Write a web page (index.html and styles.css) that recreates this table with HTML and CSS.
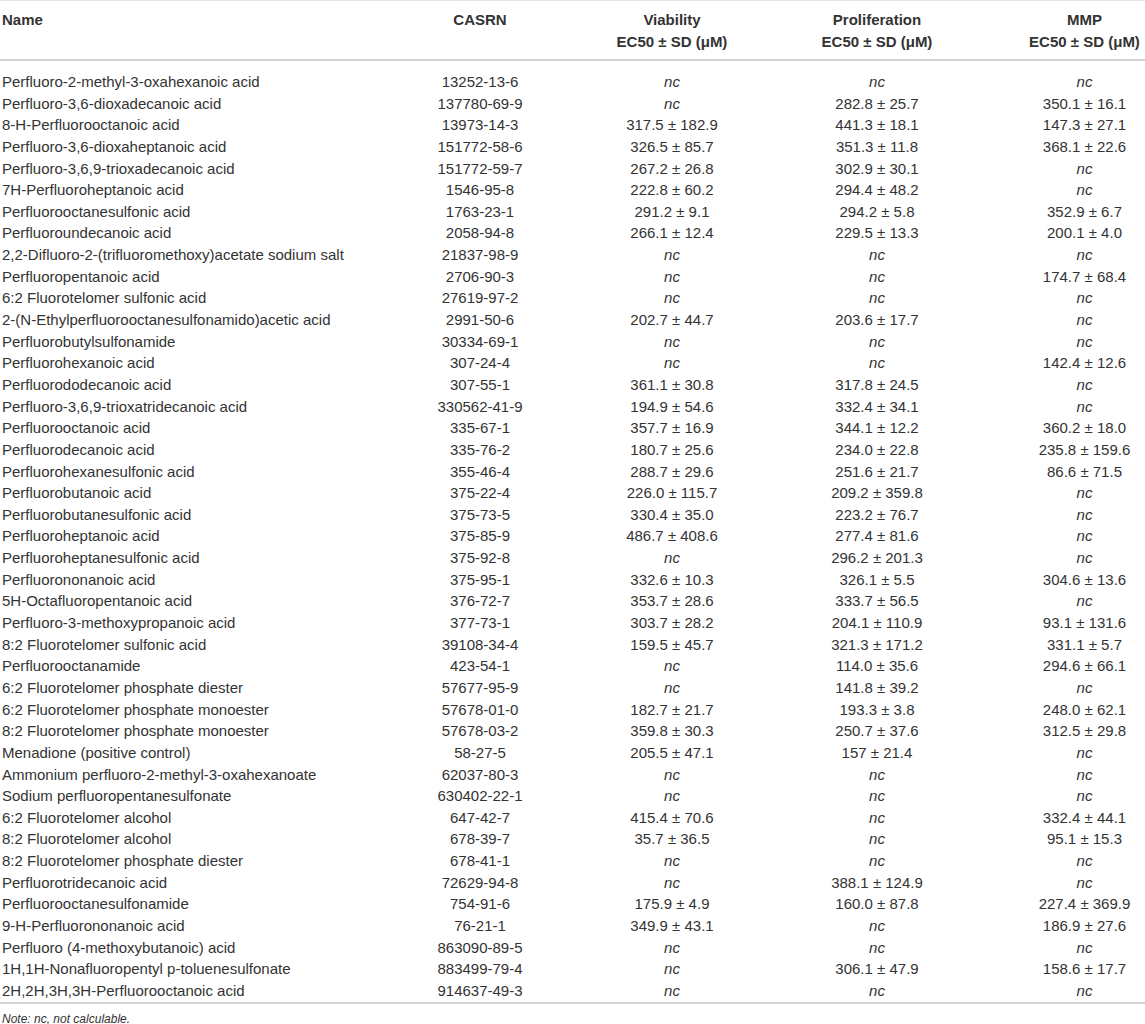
FILE: index.html
```html
<!DOCTYPE html>
<html>
<head>
    <meta charset="utf-8">
    <link rel="stylesheet" href="styles.css">
</head>
<body>
    <table class="data">
        <colgroup>
            <col class="c-name">
            <col class="c-cas">
            <col class="c-via">
            <col class="c-pro">
            <col class="c-mmp">
        </colgroup>
        <thead>
            <tr>
                <th class="name">Name</th>
                <th>CASRN</th>
                <th>Viability<br>EC50 ± SD (μM)</th>
                <th>Proliferation<br>EC50 ± SD (μM)</th>
                <th class="mmp">MMP<br>EC50 ± SD (μM)</th>
            </tr>
        </thead>
        <tbody>
            <tr><td class="name">Perfluoro-2-methyl-3-oxahexanoic acid</td><td>13252-13-6</td><td><i>nc</i></td><td><i>nc</i></td><td class="mmp"><i>nc</i></td></tr>
            <tr><td class="name">Perfluoro-3,6-dioxadecanoic acid</td><td>137780-69-9</td><td><i>nc</i></td><td>282.8 ± 25.7</td><td class="mmp">350.1 ± 16.1</td></tr>
            <tr><td class="name">8-H-Perfluorooctanoic acid</td><td>13973-14-3</td><td>317.5 ± 182.9</td><td>441.3 ± 18.1</td><td class="mmp">147.3 ± 27.1</td></tr>
            <tr><td class="name">Perfluoro-3,6-dioxaheptanoic acid</td><td>151772-58-6</td><td>326.5 ± 85.7</td><td>351.3 ± 11.8</td><td class="mmp">368.1 ± 22.6</td></tr>
            <tr><td class="name">Perfluoro-3,6,9-trioxadecanoic acid</td><td>151772-59-7</td><td>267.2 ± 26.8</td><td>302.9 ± 30.1</td><td class="mmp"><i>nc</i></td></tr>
            <tr><td class="name">7H-Perfluoroheptanoic acid</td><td>1546-95-8</td><td>222.8 ± 60.2</td><td>294.4 ± 48.2</td><td class="mmp"><i>nc</i></td></tr>
            <tr><td class="name">Perfluorooctanesulfonic acid</td><td>1763-23-1</td><td>291.2 ± 9.1</td><td>294.2 ± 5.8</td><td class="mmp">352.9 ± 6.7</td></tr>
            <tr><td class="name">Perfluoroundecanoic acid</td><td>2058-94-8</td><td>266.1 ± 12.4</td><td>229.5 ± 13.3</td><td class="mmp">200.1 ± 4.0</td></tr>
            <tr><td class="name">2,2-Difluoro-2-(trifluoromethoxy)acetate sodium salt</td><td>21837-98-9</td><td><i>nc</i></td><td><i>nc</i></td><td class="mmp"><i>nc</i></td></tr>
            <tr><td class="name">Perfluoropentanoic acid</td><td>2706-90-3</td><td><i>nc</i></td><td><i>nc</i></td><td class="mmp">174.7 ± 68.4</td></tr>
            <tr><td class="name">6:2 Fluorotelomer sulfonic acid</td><td>27619-97-2</td><td><i>nc</i></td><td><i>nc</i></td><td class="mmp"><i>nc</i></td></tr>
            <tr><td class="name">2-(N-Ethylperfluorooctanesulfonamido)acetic acid</td><td>2991-50-6</td><td>202.7 ± 44.7</td><td>203.6 ± 17.7</td><td class="mmp"><i>nc</i></td></tr>
            <tr><td class="name">Perfluorobutylsulfonamide</td><td>30334-69-1</td><td><i>nc</i></td><td><i>nc</i></td><td class="mmp"><i>nc</i></td></tr>
            <tr><td class="name">Perfluorohexanoic acid</td><td>307-24-4</td><td><i>nc</i></td><td><i>nc</i></td><td class="mmp">142.4 ± 12.6</td></tr>
            <tr><td class="name">Perfluorododecanoic acid</td><td>307-55-1</td><td>361.1 ± 30.8</td><td>317.8 ± 24.5</td><td class="mmp"><i>nc</i></td></tr>
            <tr><td class="name">Perfluoro-3,6,9-trioxatridecanoic acid</td><td>330562-41-9</td><td>194.9 ± 54.6</td><td>332.4 ± 34.1</td><td class="mmp"><i>nc</i></td></tr>
            <tr><td class="name">Perfluorooctanoic acid</td><td>335-67-1</td><td>357.7 ± 16.9</td><td>344.1 ± 12.2</td><td class="mmp">360.2 ± 18.0</td></tr>
            <tr><td class="name">Perfluorodecanoic acid</td><td>335-76-2</td><td>180.7 ± 25.6</td><td>234.0 ± 22.8</td><td class="mmp">235.8 ± 159.6</td></tr>
            <tr><td class="name">Perfluorohexanesulfonic acid</td><td>355-46-4</td><td>288.7 ± 29.6</td><td>251.6 ± 21.7</td><td class="mmp">86.6 ± 71.5</td></tr>
            <tr><td class="name">Perfluorobutanoic acid</td><td>375-22-4</td><td>226.0 ± 115.7</td><td>209.2 ± 359.8</td><td class="mmp"><i>nc</i></td></tr>
            <tr><td class="name">Perfluorobutanesulfonic acid</td><td>375-73-5</td><td>330.4 ± 35.0</td><td>223.2 ± 76.7</td><td class="mmp"><i>nc</i></td></tr>
            <tr><td class="name">Perfluoroheptanoic acid</td><td>375-85-9</td><td>486.7 ± 408.6</td><td>277.4 ± 81.6</td><td class="mmp"><i>nc</i></td></tr>
            <tr><td class="name">Perfluoroheptanesulfonic acid</td><td>375-92-8</td><td><i>nc</i></td><td>296.2 ± 201.3</td><td class="mmp"><i>nc</i></td></tr>
            <tr><td class="name">Perfluorononanoic acid</td><td>375-95-1</td><td>332.6 ± 10.3</td><td>326.1 ± 5.5</td><td class="mmp">304.6 ± 13.6</td></tr>
            <tr><td class="name">5H-Octafluoropentanoic acid</td><td>376-72-7</td><td>353.7 ± 28.6</td><td>333.7 ± 56.5</td><td class="mmp"><i>nc</i></td></tr>
            <tr><td class="name">Perfluoro-3-methoxypropanoic acid</td><td>377-73-1</td><td>303.7 ± 28.2</td><td>204.1 ± 110.9</td><td class="mmp">93.1 ± 131.6</td></tr>
            <tr><td class="name">8:2 Fluorotelomer sulfonic acid</td><td>39108-34-4</td><td>159.5 ± 45.7</td><td>321.3 ± 171.2</td><td class="mmp">331.1 ± 5.7</td></tr>
            <tr><td class="name">Perfluorooctanamide</td><td>423-54-1</td><td><i>nc</i></td><td>114.0 ± 35.6</td><td class="mmp">294.6 ± 66.1</td></tr>
            <tr><td class="name">6:2 Fluorotelomer phosphate diester</td><td>57677-95-9</td><td><i>nc</i></td><td>141.8 ± 39.2</td><td class="mmp"><i>nc</i></td></tr>
            <tr><td class="name">6:2 Fluorotelomer phosphate monoester</td><td>57678-01-0</td><td>182.7 ± 21.7</td><td>193.3 ± 3.8</td><td class="mmp">248.0 ± 62.1</td></tr>
            <tr><td class="name">8:2 Fluorotelomer phosphate monoester</td><td>57678-03-2</td><td>359.8 ± 30.3</td><td>250.7 ± 37.6</td><td class="mmp">312.5 ± 29.8</td></tr>
            <tr><td class="name">Menadione (positive control)</td><td>58-27-5</td><td>205.5 ± 47.1</td><td>157 ± 21.4</td><td class="mmp"><i>nc</i></td></tr>
            <tr><td class="name">Ammonium perfluoro-2-methyl-3-oxahexanoate</td><td>62037-80-3</td><td><i>nc</i></td><td><i>nc</i></td><td class="mmp"><i>nc</i></td></tr>
            <tr><td class="name">Sodium perfluoropentanesulfonate</td><td>630402-22-1</td><td><i>nc</i></td><td><i>nc</i></td><td class="mmp"><i>nc</i></td></tr>
            <tr><td class="name">6:2 Fluorotelomer alcohol</td><td>647-42-7</td><td>415.4 ± 70.6</td><td><i>nc</i></td><td class="mmp">332.4 ± 44.1</td></tr>
            <tr><td class="name">8:2 Fluorotelomer alcohol</td><td>678-39-7</td><td>35.7 ± 36.5</td><td><i>nc</i></td><td class="mmp">95.1 ± 15.3</td></tr>
            <tr><td class="name">8:2 Fluorotelomer phosphate diester</td><td>678-41-1</td><td><i>nc</i></td><td><i>nc</i></td><td class="mmp"><i>nc</i></td></tr>
            <tr><td class="name">Perfluorotridecanoic acid</td><td>72629-94-8</td><td><i>nc</i></td><td>388.1 ± 124.9</td><td class="mmp"><i>nc</i></td></tr>
            <tr><td class="name">Perfluorooctanesulfonamide</td><td>754-91-6</td><td>175.9 ± 4.9</td><td>160.0 ± 87.8</td><td class="mmp">227.4 ± 369.9</td></tr>
            <tr><td class="name">9-H-Perfluorononanoic acid</td><td>76-21-1</td><td>349.9 ± 43.1</td><td><i>nc</i></td><td class="mmp">186.9 ± 27.6</td></tr>
            <tr><td class="name">Perfluoro (4-methoxybutanoic) acid</td><td>863090-89-5</td><td><i>nc</i></td><td><i>nc</i></td><td class="mmp"><i>nc</i></td></tr>
            <tr><td class="name">1H,1H-Nonafluoropentyl p-toluenesulfonate</td><td>883499-79-4</td><td><i>nc</i></td><td>306.1 ± 47.9</td><td class="mmp">158.6 ± 17.7</td></tr>
            <tr><td class="name">2H,2H,3H,3H-Perfluorooctanoic acid</td><td>914637-49-3</td><td><i>nc</i></td><td><i>nc</i></td><td class="mmp"><i>nc</i></td></tr>
        </tbody>
    </table>
    <p class="note">Note: nc, not calculable.</p>
</body>
</html>
```

FILE: styles.css
```css
body {
    margin: 0;
    padding: 0;
    font-family: "Liberation Sans", Arial, sans-serif;
    color: #333;
    background: #fff;
}
.data {
    width: 1145px;
    border-collapse: collapse;
    table-layout: fixed;
    font-size: 15px;
    border-top: 1px solid #e4e4e4;
}
.c-name { width: 396px; }
.c-cas { width: 168px; }
.c-via { width: 216px; }
.c-pro { width: 194px; }
.c-mmp { width: 171px; }
th, td {
    padding: 0;
    text-align: center;
    white-space: nowrap;
}
.name {
    text-align: left;
    padding-left: 2px;
}
.mmp {
    padding-left: 50px;
}
thead th {
    font-weight: bold;
    line-height: 22px;
    vertical-align: top;
    padding-top: 8px;
    padding-bottom: 6px;
    border-bottom: 2px solid #d4d4d4;
}
tbody td {
    line-height: 21.64px;
}
tbody tr:first-child td {
    padding-top: 10px;
}
tbody tr:last-child td {
    border-bottom: 2px solid #d4d4d4;
}
.note {
    margin: 8px 0 0;
    padding-left: 2px;
    font-size: 12px;
    line-height: 14px;
    font-style: italic;
}
```
